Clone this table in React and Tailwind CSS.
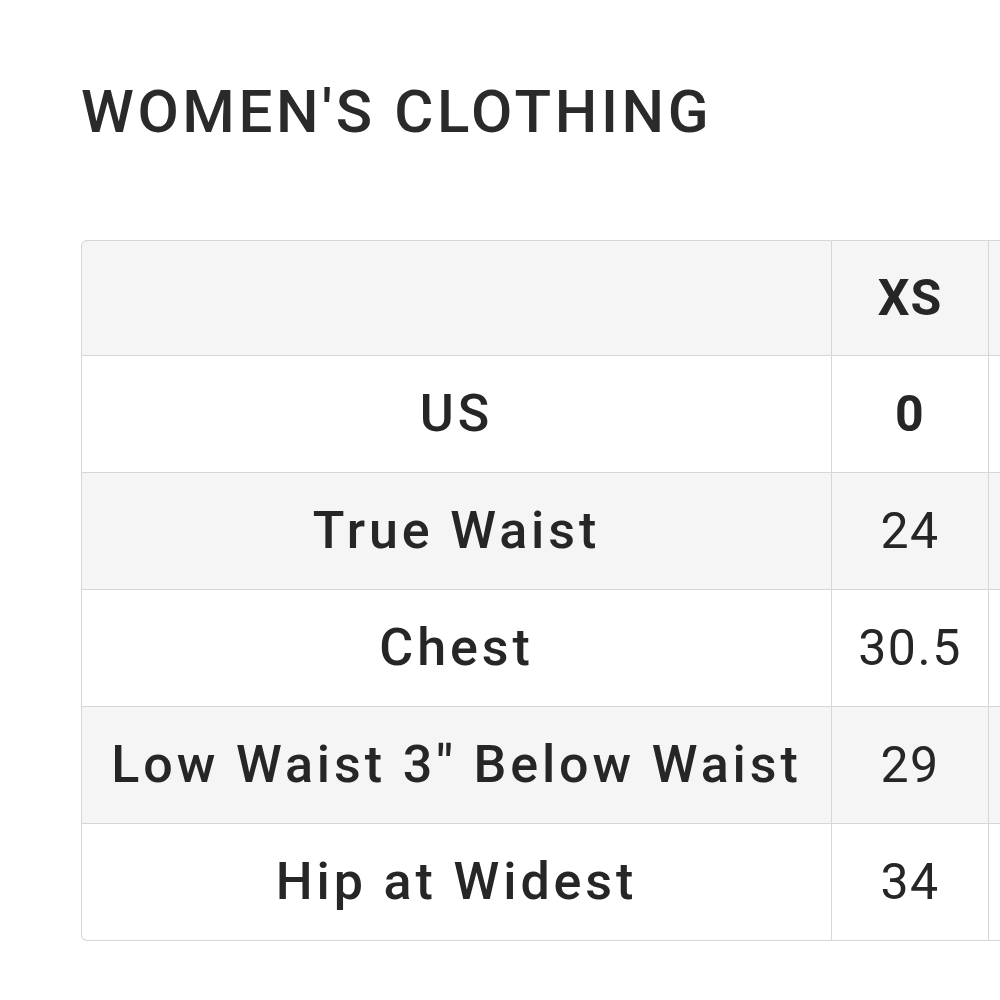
const rows = [
  { label: "US", value: "0", bold: true },
  { label: "True Waist", value: "24" },
  { label: "Chest", value: "30.5" },
  { label: 'Low Waist 3" Below Waist', value: "29" },
  { label: "Hip at Widest", value: "34" },
];

export default function App() {
  return (
    <div
      className="w-[1000px] h-[1000px] overflow-hidden bg-white text-[#262626]"
      style={{ fontFamily: "Roboto, 'Liberation Sans', sans-serif" }}
    >
      <h1 className="pt-[82px] pl-[81px] text-[60px] leading-[60px] font-medium tracking-[3.6px] text-[#2a2a2a] whitespace-nowrap">
        WOMEN'S CLOTHING
      </h1>
      <div className="ml-[81px] mt-[98px]">
        <table className="border-separate border-spacing-0 table-fixed w-[1065px]">
          <colgroup>
            <col className="w-[751px]" />
            <col className="w-[157px]" />
            <col className="w-[157px]" />
          </colgroup>
          <thead>
            <tr className="bg-[#f5f5f5] h-[116px]">
              <th className="border border-[#d6d6d6] rounded-tl-[6px]" />
              <th className="border-y border-r border-[#d6d6d6] text-[50px] font-bold tracking-[1px]">
                XS
              </th>
              <th className="border-y border-r border-[#d6d6d6]" />
            </tr>
          </thead>
          <tbody>
            {rows.map((r, i) => (
              <tr
                key={r.label}
                className={`h-[117px] ${i % 2 === 1 ? "bg-[#f5f5f5]" : "bg-white"}`}
              >
                <td
                  className={`border-x border-b border-[#d6d6d6] text-center text-[52px] font-medium tracking-[3.9px] whitespace-nowrap ${
                    i === rows.length - 1 ? "rounded-bl-[6px]" : ""
                  }`}
                >
                  {r.label}
                </td>
                <td
                  className={`border-r border-b border-[#d6d6d6] text-center text-[50px] tracking-[1.5px] whitespace-nowrap ${
                    r.bold ? "font-bold" : "font-normal"
                  }`}
                >
                  {r.value}
                </td>
                <td className="border-r border-b border-[#d6d6d6]" />
              </tr>
            ))}
          </tbody>
        </table>
      </div>
    </div>
  );
}
